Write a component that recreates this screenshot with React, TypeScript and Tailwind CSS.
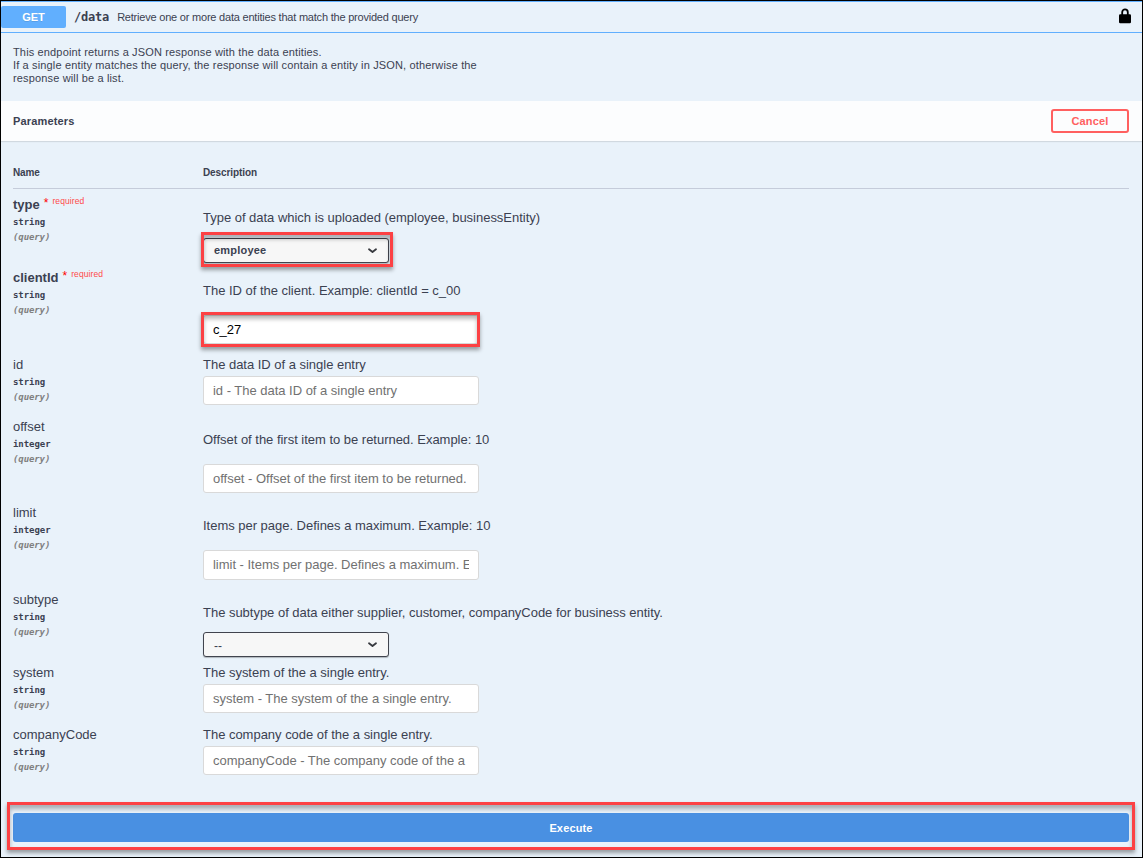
import type { ReactNode } from "react";

const MONO = "font-['DejaVu_Sans_Mono',monospace]";

type Param = {
  name: string;
  kind: string;
  required?: boolean;
  description: string;
  height: string;
  textTop: string;
  gap: string;
  control: ReactNode;
};

function Callout({ className }: { className: string }) {
  return (
    <div
      className={`pointer-events-none absolute border-[3px] border-[#fc4144] shadow-[0px_3px_4px_rgba(0,0,0,0.36),inset_0px_4px_4px_rgba(0,0,0,0.28)] ${className}`}
    />
  );
}

function Field({ text, value, height = "h-[29px]" }: { text: string; value?: boolean; height?: string }) {
  return (
    <div
      className={`flex w-[276px] items-start overflow-hidden rounded-[3px] border border-[#d9d9d9] bg-white px-[9px] pt-[6px] text-[13px] leading-[15px] tracking-[-0.02px] whitespace-nowrap ${height} ${value ? "text-black" : "text-[#717171]"}`}
    >
      <span className="block w-full overflow-hidden">{text}</span>
    </div>
  );
}

function Select({ text, bold, height }: { text: string; bold?: boolean; height: string }) {
  return (
    <div
      className={`flex w-[186px] items-center justify-between rounded-[3px] border border-[#41444e] bg-[#f7f7f7] pr-[11px] pl-[10px] text-[11px] text-[#3b4151] shadow-[0_1px_1px_rgba(0,0,0,0.25)] ${height}`}
    >
      <span className={bold ? "font-bold tracking-[0.2px]" : "pt-[2px] text-[12px]"}>{text}</span>
      <svg width="9" height="6" viewBox="0 0 9 6" fill="none">
        <path d="M1 1.2 L4.5 4 L8 1.2" stroke="#36383e" strokeWidth="1.8" strokeLinecap="round" strokeLinejoin="round" />
      </svg>
    </div>
  );
}

const params: Param[] = [
  {
    name: "type",
    kind: "string",
    required: true,
    description: "Type of data which is uploaded (employee, businessEntity)",
    height: "h-[73px]",
    textTop: "pt-[21px]",
    gap: "mt-[13px]",
    control: (
      <div className="relative w-[186px]">
        <Select text="employee" bold height="h-[25px]" />
        <Callout className="-top-[6px] -left-[2px] h-[35px] w-[192px]" />
      </div>
    ),
  },
  {
    name: "clientId",
    kind: "string",
    required: true,
    description: "The ID of the client. Example: clientId = c_00",
    height: "h-[87px]",
    textTop: "pt-[21px]",
    gap: "mt-[17px]",
    control: (
      <div className="relative w-[276px]">
        <Field text="c_27" value />
        <Callout className="-top-[3px] -left-[2px] h-[35px] w-[279px]" />
      </div>
    ),
  },
  {
    name: "id",
    kind: "string",
    description: "The data ID of a single entry",
    height: "h-[62px]",
    textTop: "pt-[8px]",
    gap: "mt-[4px]",
    control: <Field text="id - The data ID of a single entry" />,
  },
  {
    name: "offset",
    kind: "integer",
    description: "Offset of the first item to be returned. Example: 10",
    height: "h-[86px]",
    textTop: "pt-[21px]",
    gap: "mt-[17px]",
    control: <Field text="offset - Offset of the first item to be returned." />,
  },
  {
    name: "limit",
    kind: "integer",
    description: "Items per page. Defines a maximum. Example: 10",
    height: "h-[87px]",
    textTop: "pt-[21px]",
    gap: "mt-[17px]",
    control: <Field text="limit - Items per page. Defines a maximum. Example: 10" height="h-[30px]" />,
  },
  {
    name: "subtype",
    kind: "string",
    description: "The subtype of data either supplier, customer, companyCode for business entity.",
    height: "h-[73px]",
    textTop: "pt-[21px]",
    gap: "mt-[12px]",
    control: <Select text="--" height="h-[25px]" />,
  },
  {
    name: "system",
    kind: "string",
    description: "The system of the a single entry.",
    height: "h-[62px]",
    textTop: "pt-[8px]",
    gap: "mt-[4px]",
    control: <Field text="system - The system of the a single entry." />,
  },
  {
    name: "companyCode",
    kind: "string",
    description: "The company code of the a single entry.",
    height: "h-[62px]",
    textTop: "pt-[8px]",
    gap: "mt-[4px]",
    control: <Field text="companyCode - The company code of the a" />,
  },
];

function ParamRow({ p }: { p: Param }) {
  return (
    <div className={`flex ${p.height}`}>
      <div className="w-[190px] shrink-0 pt-[8px]">
        <div className="flex h-[15px] text-[13px] leading-[15px] whitespace-nowrap">
          <span className={p.required ? "font-bold" : ""}>{p.name}</span>
          {p.required && (
            <>
              <span className="-mt-px ml-[4px] text-[12px] text-[#f00]">*</span>
              <span className="-mt-[3px] ml-[4px] text-[8.5px] tracking-[0.1px] text-[#ff4a4a]">required</span>
            </>
          )}
        </div>
        <div className={`mt-[4px] text-[9px] leading-[12px] font-bold tracking-[-0.05px] ${MONO}`}>{p.kind}</div>
        <div className={`mt-[3px] text-[9px] leading-[12px] font-bold tracking-[-0.1px] text-[#808080] italic ${MONO}`}>
          (query)
        </div>
      </div>
      <div className={p.textTop}>
        <div className="text-[13px] leading-[15px] tracking-[-0.02px] whitespace-nowrap">{p.description}</div>
        <div className={p.gap}>{p.control}</div>
      </div>
    </div>
  );
}

export default function App() {
  return (
    <div className="flex h-[858px] w-[1143px] flex-col overflow-hidden border border-black bg-[#e9f2fa] font-['Liberation_Sans',Arial,sans-serif] text-[#3b4151]">
      <header className="flex h-[32px] shrink-0 items-center border-t border-b border-[#61affe] pr-[11px]">
        <div className="flex h-[22px] w-[65px] items-center justify-center rounded-[2px] bg-[#61affe] text-[11px] font-bold text-white [text-shadow:0_1px_0_rgba(0,0,0,0.1)]">
          GET
        </div>
        <span className={`ml-[8px] text-[12px] font-bold tracking-[-0.2px] ${MONO}`}>/data</span>
        <span className="ml-[8px] text-[11px] tracking-[-0.21px]">
          Retrieve one or more data entities that match the provided query
        </span>
        <svg className="mt-[-2px] ml-auto" width="12" height="16" viewBox="0 0 12 16" fill="none">
          <path d="M3.2 8 V4.2 C3.2 .4 8.8 .4 8.8 4.2 V8" stroke="#000" strokeWidth="1.8" />
          <rect y="6.3" width="12" height="9" rx="1.2" fill="#000" />
        </svg>
      </header>
      <div className="h-[68px] shrink-0 pt-[13px] pl-[12px] text-[11px] leading-[13px] tracking-[0.148px]">
        <p>This endpoint returns a JSON response with the data entities.</p>
        <p>If a single entity matches the query, the response will contain a entity in JSON, otherwise the</p>
        <p>response will be a list.</p>
      </div>
      <div className="flex h-[40px] shrink-0 items-center justify-between bg-[#fcfdfe] pr-[13px] pl-[12px] text-[11px] font-bold shadow-[0_1px_1px_rgba(0,0,0,0.1)]">
        <span className="tracking-[0.15px]">Parameters</span>
        <div className="flex h-[24px] w-[78px] items-center justify-center rounded-[3px] border-2 border-[#ff6060] tracking-[0.15px] text-[#ff6060]">
          Cancel
        </div>
      </div>
      <div className="mt-[25px] mr-[13px] ml-[12px] flex h-[23px] shrink-0 border-b border-[#c5ccda] text-[10px] leading-[13px] font-bold tracking-[-0.1px]">
        <span className="w-[190px]">Name</span>
        <span>Description</span>
      </div>
      <div className="ml-[12px] flex flex-col">
        {params.map((p) => (
          <ParamRow key={p.name} p={p} />
        ))}
      </div>
      <div className="relative mt-[32px] mr-[13px] ml-[12px] flex h-[29px] shrink-0 items-center justify-center rounded-[3px] bg-[#4990e2] pt-[2px] text-[11px] font-bold tracking-[0.15px] text-white">
        Execute
        <Callout className="-top-[11px] -left-[6px] h-[48px] w-[1128px]" />
      </div>
    </div>
  );
}
